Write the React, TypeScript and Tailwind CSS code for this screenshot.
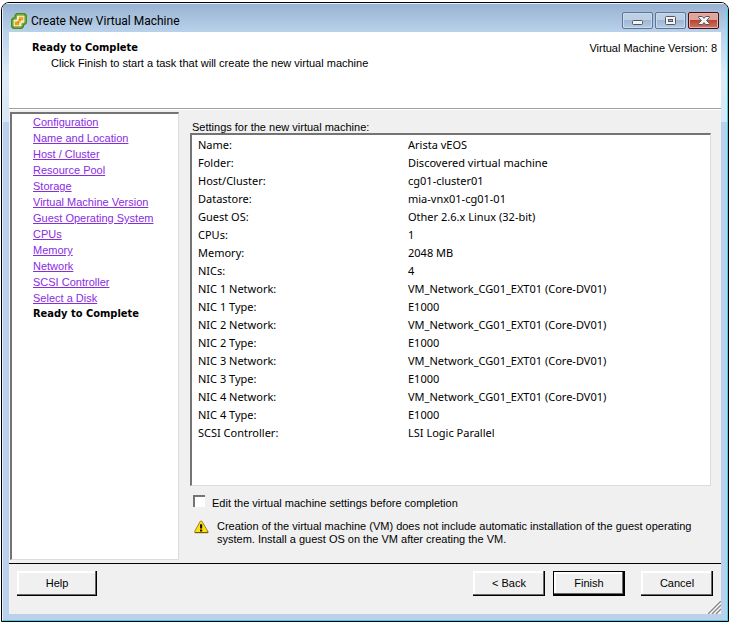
import type { ReactNode } from "react";
import clsx from "clsx";

const steps = [
  "Configuration",
  "Name and Location",
  "Host / Cluster",
  "Resource Pool",
  "Storage",
  "Virtual Machine Version",
  "Guest Operating System",
  "CPUs",
  "Memory",
  "Network",
  "SCSI Controller",
  "Select a Disk",
];

const settings = [
  ["Name:", "Arista vEOS"],
  ["Folder:", "Discovered virtual machine"],
  ["Host/Cluster:", "cg01-cluster01"],
  ["Datastore:", "mia-vnx01-cg01-01"],
  ["Guest OS:", "Other 2.6.x Linux (32-bit)"],
  ["CPUs:", "1"],
  ["Memory:", "2048 MB"],
  ["NICs:", "4"],
  ["NIC 1 Network:", "VM_Network_CG01_EXT01 (Core-DV01)"],
  ["NIC 1 Type:", "E1000"],
  ["NIC 2 Network:", "VM_Network_CG01_EXT01 (Core-DV01)"],
  ["NIC 2 Type:", "E1000"],
  ["NIC 3 Network:", "VM_Network_CG01_EXT01 (Core-DV01)"],
  ["NIC 3 Type:", "E1000"],
  ["NIC 4 Network:", "VM_Network_CG01_EXT01 (Core-DV01)"],
  ["NIC 4 Type:", "E1000"],
  ["SCSI Controller:", "LSI Logic Parallel"],
];

const Logo = () => (
  <svg width="16" height="16" viewBox="0 0 16 16" aria-hidden="true">
    <path
      d="M6 1.2h7.4l1.4 1.4v7L13.4 11h-1.6v2.4l-1.4 1.4H2.6l-1.4-1.4V6.8l1.4-1.4h2V2.6z"
      fill="#eef3dc"
      stroke="#4c8a1f"
      strokeWidth="2.4"
      strokeLinejoin="round"
    />
    <path
      d="M6.3 1.7h6.8l1.1 1.1v6.5l-1.1 1.2h-1.8v2.6l-1.2 1.1H2.9l-1.1-1.1V7.1l1.1-1.2h2.3V2.9z"
      fill="none"
      stroke="#80b83a"
    />
    <path d="M3.8 8.6h4.4v3.6H3.8z" fill="#f09c10" />
    <path d="M8 3.8h4.4v3.6H8z" fill="#f5a91c" />
    <path d="M6.6 6.2h3.2v3.6H6.6z" fill="#f7c34a" />
    <path d="M8 6.2h1.8v1.2H8zM6.6 8.6h1.6v1.2H6.6z" fill="#c8660a" />
  </svg>
);

const WarningIcon = () => (
  <svg width="15" height="14" viewBox="0 0 15 14" className="shrink-0" aria-hidden="true">
    <path d="M6.3 1.2h1.6l5.8 10v1.3H.8v-1.3z" fill="#ffdf10" stroke="#9c8424" strokeLinejoin="round" />
    <path d="M1 12.7h12.8v-1.4" fill="none" stroke="#6b5600" />
    <path d="M6 4.2h2.2v4.4H6zM6 9.6h2.2v2H6z" fill="#1a1500" />
  </svg>
);

const ResizeGrip = () => (
  <svg width="13" height="13" viewBox="0 0 13 13" className="absolute right-0 bottom-0" aria-hidden="true">
    <path d="M0 13 13 0M4 13l9-9M8 13l5-5" stroke="#fff" strokeWidth="3" />
    <path d="M0 13 13 0M4 13l9-9M8 13l5-5" stroke="#8a8a8a" strokeWidth="1.5" />
  </svg>
);

type CaptionButtonProps = { label: string; close?: boolean; children: ReactNode };

const CaptionButton = ({ label, close, children }: CaptionButtonProps) => (
  <button
    type="button"
    aria-label={label}
    className={clsx(
      "flex h-[17px] w-[31px] items-center justify-center rounded-xs border",
      close
        ? "border-[#43101a] bg-linear-to-b from-[#e0a598] from-45% via-[#b84635] via-50% to-[#cf7560] shadow-[inset_0_0_0_1px_#e3b3a9]"
        : "border-[#5f7693] bg-linear-to-b from-[#bccfe4] from-45% via-[#9fb8d3] via-50% to-[#b5cbe3] shadow-[inset_0_0_0_1px_#cbdbec]"
    )}
  >
    {children}
  </button>
);

type DialogButtonProps = { primary?: boolean; className: string; children: ReactNode };

const DialogButton = ({ primary, className, children }: DialogButtonProps) => (
  <button
    type="button"
    className={clsx(
      "h-[25px] bg-[#f0f0f0] text-center",
      primary
        ? "border border-black shadow-[inset_-1px_-1px_#000,inset_-2px_-2px_#696969,inset_2px_2px_#fff]"
        : "shadow-[inset_-1px_-1px_#000,inset_-2px_-2px_#696969,inset_2px_2px_#fff]",
      className
    )}
  >
    {children}
  </button>
);

const sunken =
  "border-t-2 border-l-2 border-r border-b border-t-[#747474] border-l-[#747474] border-r-[#dcdcdc] border-b-[#dcdcdc] bg-white";

const App = () => {
  return (
    <div className="bg-white pt-0.5 pr-0.5 pl-px pb-px font-['Liberation_Sans',sans-serif] text-[11px] leading-[13px] text-black">
      <div className="overflow-hidden rounded-t-lg border border-black bg-[#b9d1ea]">
        <div className="border-t border-r border-b border-l border-t-[#eaf3fb] border-l-[#e4eef8] border-r-[#3fd0ea] border-b-[#3fd0ea] bg-[linear-gradient(#98b3d2,#b9d1ea_28px,#dfebf8_70px,#d9e6f5_118px,#b9d1ea_118px)] px-1.5 pb-1.5">
          {/* Title bar */}
          <div className="flex h-7 items-center justify-between pr-0.5 pl-0.5">
            <div className="flex items-center gap-1 pt-[5px]">
              <Logo />
              <h1 className="font-[Roboto,sans-serif] text-xs">Create New Virtual Machine</h1>
            </div>
            <div className="flex gap-0.5 pt-1">
              <CaptionButton label="Minimize">
                <svg width="12" height="11" viewBox="0 0 12 11" aria-hidden="true">
                  <rect x=".5" y="5.5" width="10" height="4" rx="1" fill="#f4f4f4" stroke="#535666" />
                </svg>
              </CaptionButton>
              <CaptionButton label="Maximize">
                <svg width="12" height="11" viewBox="0 0 12 11" aria-hidden="true">
                  <rect x=".5" y="1.5" width="10" height="8" rx="1" fill="#f4f4f4" stroke="#535666" />
                  <rect x="3.5" y="4.5" width="4" height="2" fill="#9db5d0" stroke="#535666" />
                </svg>
              </CaptionButton>
              <CaptionButton label="Close" close>
                <svg width="12" height="11" viewBox="0 0 12 11" aria-hidden="true">
                  <path
                    d="M.6 1.5h3.8L6 3.4l1.6-1.9h3.8v1L8.6 5.5l2.8 3v1H7.6L6 7.6 4.4 9.5H.6v-1l2.8-3-2.8-3z"
                    fill="#f6f6f6"
                    stroke="#535666"
                    strokeLinejoin="round"
                  />
                </svg>
              </CaptionButton>
            </div>
          </div>

          <div className="relative bg-[#f0f0f0]">
            {/* Header */}
            <header className="flex h-[77px] justify-between border-b border-[#a0a0a0] bg-white pt-[9px] pr-1 pl-[23px]">
              <div>
                <h2 className="font-['DejaVu_Sans_Condensed',sans-serif] font-bold">Ready to Complete</h2>
                <p className="mt-[3px] pl-[19px]">
                  Click Finish to start a task that will create the new virtual machine
                </p>
              </div>
              <p className="pt-px">Virtual Machine Version: 8</p>
            </header>

            <div className="flex gap-[11px] border-t border-white pt-0.5 pr-2.5 pb-[3px] pl-px">
              <nav className={clsx("w-[169px] shrink-0 pl-[21px] leading-4", sunken)}>
                <ul>
                  {steps.map((step) => (
                    <li key={step}>
                      <a href="#" className="text-[#8a2be2] underline">
                        {step}
                      </a>
                    </li>
                  ))}
                  <li className="font-['DejaVu_Sans_Condensed',sans-serif] font-bold" aria-current="step">
                    Ready to Complete
                  </li>
                </ul>
              </nav>

              <main className="min-w-0 flex-1 pt-[9px] pb-3.5">
                <h3 className="pl-0.5 leading-3">Settings for the new virtual machine:</h3>
                <div className={clsx("min-h-[353px] pl-1.5", sunken)}>
                  <table className="w-full table-fixed text-left font-['Noto_Sans',sans-serif]">
                    <tbody>
                      {settings.map(([name, value]) => (
                        <tr key={name} className="h-[18px]">
                          <th scope="row" className="w-[210px] font-normal">
                            {name}
                          </th>
                          <td>{value}</td>
                        </tr>
                      ))}
                    </tbody>
                  </table>
                </div>
                <label className="mt-[9px] flex items-start gap-[7px] pl-[3px]">
                  <input
                    type="checkbox"
                    className="size-3 appearance-none border-t-2 border-l-2 border-t-[#747474] border-l-[#747474] bg-white"
                  />
                  <span className="pt-0.5">Edit the virtual machine settings before completion</span>
                </label>
                <div className="mt-2.5 flex gap-2 pl-1">
                  <WarningIcon />
                  <p>
                    Creation of the virtual machine (VM) does not include automatic installation of the guest operating
                    system. Install a guest OS on the VM after creating the VM.
                  </p>
                </div>
              </main>
            </div>

            {/* Buttons */}
            <footer className="flex justify-between border-t border-black px-2 pt-[7px] pb-[18px]">
              <DialogButton className="w-20">Help</DialogButton>
              <div className="flex">
                <DialogButton className="w-[72px]">&lt; Back</DialogButton>
                <DialogButton primary className="ml-2 w-[72px]">
                  Finish
                </DialogButton>
                <DialogButton className="ml-4 w-[72px]">Cancel</DialogButton>
              </div>
            </footer>
            <ResizeGrip />
          </div>
        </div>
      </div>
    </div>
  );
};

export default App;
